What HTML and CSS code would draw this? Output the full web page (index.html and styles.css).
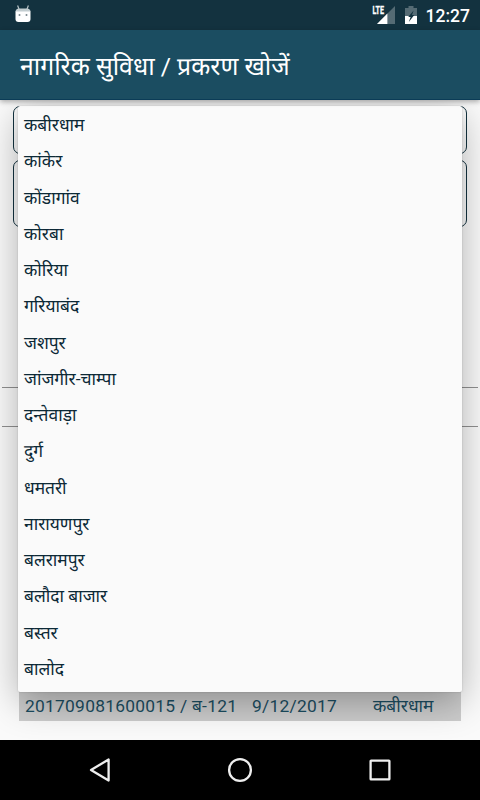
FILE: index.html
```
<!DOCTYPE html>
<html lang="hi">
<head>
  <meta charset="UTF-8">
  <title>नागरिक सुविधा / प्रकरण खोजें</title>
  <link rel="stylesheet" href="styles.css">
</head>
<body>
  <div class="status-bar">
    <svg class="droid" width="16" height="18" viewBox="0 0 16 18">
      <path d="M2.6 0.5L4 4M13.4 0.5L12 4" stroke="#b9c4c8" stroke-width="1.2"/>
      <path d="M0.5 7Q0.5 3.5 4 3.5H12Q15.5 3.5 15.5 7Z" fill="#c3cdd0"/>
      <path d="M0.5 6.5H15.5V14Q15.5 17 12.5 17H3.5Q0.5 17 0.5 14Z" fill="#fff"/>
      <circle cx="4.5" cy="10" r="1" fill="#78868c"/>
      <circle cx="11.5" cy="10" r="1" fill="#78868c"/>
    </svg>
    <div class="status-icons">
      <svg class="signal" width="24" height="20" viewBox="0 0 24 20">
        <path d="M23 1V19H5Z" fill="#556b74"/>
        <path d="M15.4 8.6V19H5Z" fill="#fff"/>
        <path d="M0 0H12.5V9H0Z" fill="#13323f"/>
        <text x="0.5" y="8.8" class="lte" textLength="11.5" lengthAdjust="spacingAndGlyphs">LTE</text>
      </svg>
      <svg class="battery" width="12" height="18" viewBox="0 0 12 18">
        <path d="M0 2H3.5V0H8.5V2H12V18H0Z" fill="#556b74"/>
        <path d="M0 10H12V18H0Z" fill="#fff"/>
        <path d="M8.6 4.5L3.2 11H5.6L3.8 16L9.3 9H7Z" fill="#13323f"/>
      </svg>
      <span class="clock">12:27</span>
    </div>
  </div>
  <header class="app-bar">
    <h1>नागरिक सुविधा / प्रकरण खोजें</h1>
  </header>

  <main class="screen">
    <div class="field"></div>
    <div class="field field-tall"></div>
    <div class="rules"></div>
    <div class="case-row">
      <span class="case-no">201709081600015 / ब-121</span>
      <span class="case-date">9/12/2017</span>
      <span class="case-place">कबीरधाम</span>
    </div>

    <ul class="dropdown">
      <li>कबीरधाम</li>
      <li>कांकेर</li>
      <li>कोंडागांव</li>
      <li>कोरबा</li>
      <li>कोरिया</li>
      <li>गरियाबंद</li>
      <li>जशपुर</li>
      <li>जांजगीर-चाम्पा</li>
      <li>दन्तेवाड़ा</li>
      <li>दुर्ग</li>
      <li>धमतरी</li>
      <li>नारायणपुर</li>
      <li>बलरामपुर</li>
      <li>बलौदा बाजार</li>
      <li>बस्तर</li>
      <li>बालोद</li>
    </ul>
  </main>

  <nav class="nav-bar">
    <svg width="24" height="26" viewBox="0 0 24 26"><path d="M20.6 2.5V23.5L3 13Z"/></svg>
    <svg width="26" height="26" viewBox="0 0 26 26"><circle cx="13" cy="13" r="10.9"/></svg>
    <svg width="24" height="26" viewBox="0 0 24 26"><rect x="2.6" y="3.6" width="18.8" height="18.8" rx="0.5"/></svg>
  </nav>
</body>
</html>
```
FILE: styles.css
```
* { box-sizing: border-box; }
body {
  margin: 0;
  width: 480px;
  height: 800px;
  display: flex;
  flex-direction: column;
  overflow: hidden;
  font-family: Roboto, "Noto Sans Devanagari", "Noto Sans", sans-serif;
  background: #fafafa;
}
.status-bar {
  height: 30px;
  display: flex;
  justify-content: space-between;
  padding: 0 10px 0 15px;
  background: #13323f;
}
.droid { margin-top: 5px; }
.status-icons { display: flex; }
.signal { margin: 5px 9px 0 0; }
.battery { margin: 6px 9px 0 0; }
.lte {
  font: bold 10.5px Roboto, sans-serif;
  fill: #fff;
  stroke: #fff;
  stroke-width: 0.3;
}
.clock {
  color: #fff;
  font-size: 17.5px;
  font-weight: 500;
  line-height: 32px;
}
.app-bar {
  position: relative;
  height: 70px;
  padding: 0 20px;
  background: #1b4d61;
  border-bottom: 1px solid #0b3c57;
  box-shadow: 0 2px 5px rgba(0, 0, 0, 0.3);
  z-index: 1;
}
.app-bar h1 {
  margin: 0;
  color: #fff;
  font-size: 24.8px;
  font-weight: 400;
  line-height: 74px;
  white-space: nowrap;
}
.screen {
  position: relative;
  height: 640px;
  padding: 6px 13px 0;
  overflow: hidden;
}
.field {
  height: 48px;
  margin-bottom: 6px;
  border: 1.5px solid #13323f;
  border-radius: 7px;
}
.field-tall { height: 67px; }
.rules {
  height: 40px;
  margin: 160px -11px 0;
  border-top: 1px solid #909090;
  border-bottom: 1px solid #909090;
}
.case-row {
  height: 31px;
  margin: 263px 6px 0;
  padding-left: 6px;
  display: flex;
  background: #cccccc;
  color: #1b4d61;
  font-size: 17.4px;
  line-height: 33px;
  white-space: nowrap;
}
.case-no { width: 227px; letter-spacing: 0.25px; }
.case-date { width: 121px; letter-spacing: 0.25px; }

/* open district spinner, lies over the form */
.dropdown {
  position: absolute;
  top: 6px;
  left: 18px;
  width: 444px;
  height: 586px;
  margin: 0;
  padding: 1px 6px;
  list-style: none;
  background: #fafafa;
  border-radius: 2px;
  box-shadow: 0 10px 36px rgba(0, 0, 0, 0.3), 0 0 2px rgba(0, 0, 0, 0.2);
}
.dropdown li {
  height: 36.25px;
  color: #0c2936;
  font-size: 17.4px;
  line-height: 36.5px;
}
.nav-bar {
  height: 60px;
  display: flex;
  justify-content: center;
  align-items: center;
  gap: 115px;
  background: #000;
}
.nav-bar svg {
  fill: none;
  stroke: #eee;
  stroke-width: 2.3;
  stroke-linejoin: round;
}
```
